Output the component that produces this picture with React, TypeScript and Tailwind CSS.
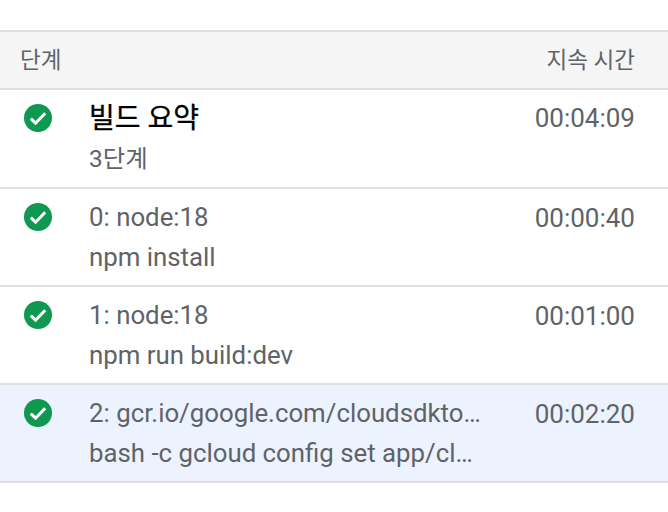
const steps = [
  { title: '0: node:18', sub: 'npm install', time: '00:00:40' },
  { title: '1: node:18', sub: 'npm run build:dev', time: '00:01:00' },
  { title: '2: gcr.io/google.com/cloudsdktool/cloud-sdk', sub: 'bash -c gcloud config set app/cloud_build_timeout 1600', time: '00:02:20', selected: true },
];

function StatusIcon() {
  return (
    <svg width="28" height="28" viewBox="0 0 28 28" className="shrink-0">
      <circle cx="14" cy="14" r="14" fill="#0f9850" />
      <path d="M6.8 14.6l4.8 4.6 9.6-10" fill="none" stroke="#fff" strokeWidth="3" />
    </svg>
  );
}

export default function App() {
  return (
    <div className="w-[668px] h-[512px] bg-white pt-[30px] font-['Roboto','Noto_Sans_CJK_KR',sans-serif] text-[#5f6368] overflow-hidden">
      <div className="flex items-center justify-between h-[60px] bg-[#f5f5f5] border-y-2 border-[#e0e0e0] pl-[20px] pr-[33px] pt-[1px] text-[22.5px]">
        <span>단계</span>
        <span>지속 시간</span>
      </div>

      <div className="flex h-[99px] border-b-2 border-[#e0e0e0] pl-[24px] pr-[33px]">
        <div className="pt-[14px]"><StatusIcon /></div>
        <div className="flex-1 pl-[37px] pt-[8px]">
          <div className="text-[28px] leading-[42px] text-[#000] [-webkit-text-stroke:0.3px_#000]">빌드 요약</div>
          <div className="text-[24.4px] leading-[37px]">3단계</div>
        </div>
        <div className="pt-[12px] text-[26px] leading-[32px]">00:04:09</div>
      </div>

      {steps.map((s) => (
        <div key={s.title} className={`flex h-[98px] border-b-2 border-[#e0e0e0] pl-[24px] pr-[33px] ${s.selected ? 'bg-[#ecf3fe]' : 'bg-white'}`}>
          <div className="pt-[14px]"><StatusIcon /></div>
          <div className="w-[431px] pl-[37px] pt-[8px] text-[25.8px] leading-[40px]">
            <div className="truncate">{s.title}</div>
            <div className="truncate">{s.sub}</div>
          </div>
          <div className="ml-auto pt-[13px] text-[26px] leading-[32px]">{s.time}</div>
        </div>
      ))}
    </div>
  );
}
